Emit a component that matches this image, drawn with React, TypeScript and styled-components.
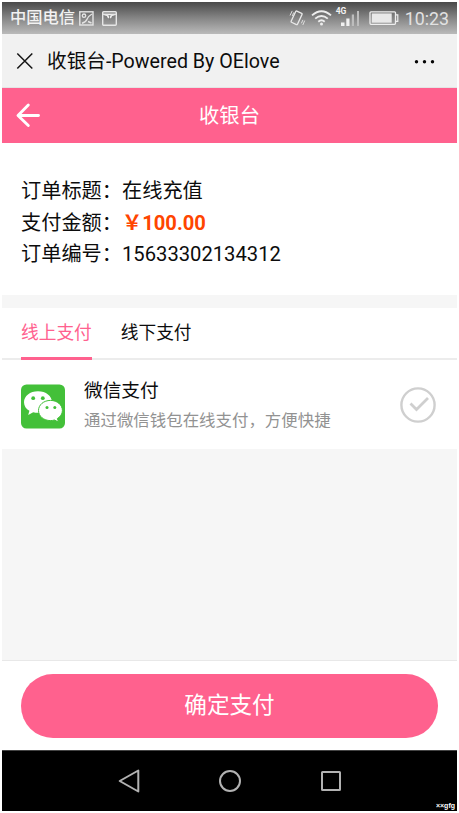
import React from "react";
import styled, { createGlobalStyle } from "styled-components";

const GlobalStyle = createGlobalStyle`
  * { box-sizing: border-box; }
  body { margin: 0; background: #fff; }
`;

const PINK = "#ff618e";

const Screen = styled.main`
  width: 455px;
  height: 809px;
  margin: 2px;
  display: flex;
  flex-direction: column;
  background: #f6f6f6;
  color: #0c0c0c;
  font-family: Roboto, "Noto Sans CJK SC", sans-serif;
  white-space: nowrap;
`;

const StatusBar = styled.div`
  height: 32px;
  flex: none;
  display: flex;
  align-items: center;
  justify-content: space-between;
  padding: 0 8px;
  color: #eee;
  background: linear-gradient(#494949, #858585 50%, #bababa);
`;

const StatusGroup = styled.div`
  display: flex;
  align-items: center;
`;

const Carrier = styled.span`
  font-size: 16.3px;
  line-height: 30px;
  font-weight: 500;
  color: #f2f2f2;
`;

const Clock = styled.span`
  font-size: 17.8px;
  line-height: 32px;
  padding-top: 1px;
  color: #e2e2e2;
`;

const Glyph = styled.svg<{ $gap?: number }>`
  display: block;
  flex: none;
  margin-left: ${(p) => p.$gap ?? 0}px;
  overflow: visible;
`;

const BrowserBar = styled.div`
  height: 54px;
  flex: none;
  display: flex;
  align-items: center;
  padding: 0 22px 0 15px;
  background: #f1f1f1;
  border-bottom: 1px solid #e4e4e4;
`;

const PageTitle = styled.span`
  flex: 1;
  margin-left: 14px;
  padding-top: 2px;
  font-size: 19.65px;
  line-height: 52px;
`;

const Header = styled.header`
  height: 55px;
  flex: none;
  display: grid;
  grid-template-columns: 60px 1fr 60px;
  align-items: center;
  background: ${PINK};
  color: #fff;
`;

const HeaderTitle = styled.h1`
  margin: 0;
  text-align: center;
  font-size: 20.3px;
  font-weight: 400;
  line-height: 54px;
`;

const Order = styled.dl`
  height: 152px;
  flex: none;
  margin: 0;
  padding: 33px 19px 0;
  background: #fff;
  font-size: 20.2px;
`;

const OrderRow = styled.div`
  display: flex;
  height: 31.6px;
  line-height: 31.6px;
`;

const Label = styled.dt`
  width: 101px;
`;

const Value = styled.dd<{ $price?: boolean }>`
  margin: 0;
  color: ${(p) => (p.$price ? "#ff4500" : "inherit")};
  font-weight: ${(p) => (p.$price ? 700 : 400)};
`;

const Tabs = styled.nav`
  height: 52px;
  flex: none;
  display: flex;
  gap: 29px;
  margin-top: 13px;
  padding: 0 19px;
  background: #fff;
  border-bottom: 2px solid #ececec;
`;

const Tab = styled.button<{ $active?: boolean }>`
  height: 52px;
  padding: 2px 0 0;
  border: 0;
  border-bottom: 3px solid ${(p) => (p.$active ? PINK : "transparent")};
  background: none;
  color: ${(p) => (p.$active ? PINK : "#0c0c0c")};
  font-family: inherit;
  font-size: 17.7px;
  line-height: 47px;
`;

const Method = styled.section`
  height: 89px;
  flex: none;
  display: flex;
  align-items: center;
  padding: 3px 21px 0 19px;
  background: #fff;
`;

const MethodText = styled.div`
  flex: 1;
  margin-left: 19px;
`;

const MethodName = styled.div`
  font-size: 18.7px;
  line-height: 30px;
`;

const MethodNote = styled.div`
  color: #929292;
  font-size: 16.45px;
  line-height: 30px;
`;

const Spacer = styled.div`
  flex: 1;
`;

const Footer = styled.footer`
  height: 90px;
  flex: none;
  padding: 13px 19px 0;
  background: #fff;
  border-top: 1px solid #e8e8e8;
`;

const PayButton = styled.button`
  display: block;
  width: 417px;
  height: 64px;
  padding: 0 0 5px;
  border: 0;
  border-radius: 32px;
  background: ${PINK};
  color: #fff;
  font-family: inherit;
  font-size: 22.6px;
`;

const SystemNav = styled.div`
  height: 61px;
  flex: none;
  position: relative;
  display: flex;
  align-items: center;
  justify-content: center;
  gap: 78px;
  background: #000;
  border-top: 1px solid #444;
`;

const Watermark = styled.span`
  position: absolute;
  right: 2px;
  bottom: 1px;
  color: #fff;
  font: 700 7px/8px "Liberation Sans", sans-serif;
`;

const PictureIcon = () => (
  <Glyph $gap={4} width="15" height="15" viewBox="0 0 15 15" fill="none" stroke="#e4e4e4" strokeWidth="1.4">
    <rect x="0.8" y="0.8" width="13.2" height="13.2" />
    <circle cx="5" cy="4.7" r="1.7" />
    <path d="M3 12.2Q6.8 11.5 8 8.3T13 3M9 10.5l3.5 1.5" />
  </Glyph>
);

const EnvelopeIcon = () => (
  <Glyph $gap={8} width="15" height="15" viewBox="0 0 15 15">
    <rect x="0.7" y="0.7" width="13.6" height="13.6" rx="1" fill="none" stroke="#e6e6e6" strokeWidth="1.4" />
    <path d="M1 2.6v1.2Q7.5 6.8 14 3.8V2.6z" fill="#e6e6e6" />
    <circle cx="7.5" cy="5.3" r="2.3" fill="#eee" />
    <path d="M6.4 4.6h2.2M7.5 4.6v4.2" stroke="#777" strokeWidth="0.8" />
  </Glyph>
);

const VibrateIcon = () => (
  <Glyph width="16" height="18" viewBox="0 0 16 18" fill="none" stroke="#e8e8e8" strokeWidth="1.3">
    <rect x="4.1" y="2.6" width="7" height="12.4" rx="0.8" transform="rotate(25 7.6 8.8)" />
    <path d="M1 6.5l2.2-4.6M3.2 7l1.6-3.6M12.4 14.3l1.5-3.4M13.8 16l1.9-4.4" strokeWidth="0.9" />
  </Glyph>
);

const WifiIcon = () => (
  <Glyph $gap={6} width="21" height="16" viewBox="0 0 21 16" fill="none" stroke="#ededed" strokeWidth="1.9">
    <path d="M1 5.4q9.5-8.2 19 0M4.2 8.6q6.3-5.4 12.6 0M7.3 11.7q3.2-2.7 6.4 0" />
    <circle cx="10.5" cy="14" r="1.5" fill="#ededed" stroke="none" />
  </Glyph>
);

const NetworkLabel = styled.span`
  align-self: flex-start;
  margin: 4px 0 0 4px;
  width: 11px;
  color: #f2f2f2;
  font-size: 8.5px;
  font-weight: 700;
  line-height: 10px;
`;

const SignalIcon = () => (
  <Glyph $gap={-6} width="19" height="16" viewBox="0 0 19 16">
    <path d="M0 12.5h3.5V16H0zM5.3 8.5h3.2V16H5.3z" fill="#f1f1f1" />
    <path d="M10.8 4.5h2.2V16h-2.2zM16 1h2v15h-2z" fill="#bdbdbd" />
  </Glyph>
);

const BatteryIcon = () => (
  <Glyph $gap={9} width="30" height="16" viewBox="0 0 30 16">
    <rect x="1" y="1.8" width="25.5" height="12.5" rx="1" fill="none" stroke="#eee" strokeWidth="1.3" />
    <rect x="2.7" y="3.4" width="20" height="9.3" fill="#e8e8e8" />
    <path d="M27 4.8h1.8v6.5H27" fill="none" stroke="#eee" strokeWidth="1.2" />
  </Glyph>
);

const CloseIcon = () => (
  <Glyph width="16" height="16" viewBox="0 0 16 16" stroke="#151515" strokeWidth="1.5">
    <path d="M.3 .5l15 15M15.3 .5l-15 15" />
  </Glyph>
);

const MoreIcon = () => (
  <Glyph width="20" height="4" viewBox="0 0 20 4" fill="#050505">
    <circle cx="1.5" cy="2.8" r="1.7" />
    <circle cx="9.5" cy="2.8" r="1.7" />
    <circle cx="17.5" cy="2.8" r="1.7" />
  </Glyph>
);

const BackIcon = () => (
  <Glyph $gap={14} width="24" height="24" viewBox="0 0 24 24" fill="none" stroke="#fff" strokeWidth="2.9" strokeLinecap="round" strokeLinejoin="round">
    <path d="M12.3 1L2 11.5 12.3 21.5M2.5 11.5h20" />
  </Glyph>
);

const WeChatIcon = () => (
  <Glyph width="44" height="44" viewBox="0 0 44 44">
    <rect y="0.5" width="44" height="44" rx="5.5" fill="#43c039" />
    <path d="M17 7.2C9 7.2 3 12 3 18.2c0 3.7 2 6.6 5.4 8.5L7.2 31l5-2.8c1.6.4 3.1.6 4.8.6 8 0 14-4.7 14-10.7S25 7.2 17 7.2z" fill="#fff" />
    <path d="M29.5 16.4c-6.8 0-12 4.5-12 10.1 0 5.7 5.2 10.1 12 10.1 1.3 0 2.7-.2 4-.6l4 2.1-1.1-3.6c3.1-1.8 5-4.6 5-8 0-5.6-5.1-10.1-11.9-10.1z" fill="#fff" stroke="#43c039" strokeWidth="1" />
    <g fill="#43c039">
      <circle cx="12.2" cy="14.2" r="1.9" />
      <circle cx="21.8" cy="14.2" r="1.9" />
      <circle cx="26" cy="23.6" r="1.5" />
      <circle cx="33.8" cy="23.6" r="1.5" />
    </g>
  </Glyph>
);

const CheckIcon = () => (
  <Glyph width="36" height="36" viewBox="0 1 36 36" fill="none" stroke="#cfcfcf" strokeWidth="2.4">
    <circle cx="18" cy="18" r="16.6" />
    <path d="M10.5 16.5l6 6L28 11" strokeWidth="2.8" />
  </Glyph>
);

const NavBackIcon = () => (
  <Glyph width="22" height="24" viewBox="0 0 22 24" fill="none" stroke="#b2b2b2" strokeWidth="2" strokeLinejoin="round">
    <path d="M20.3 1.5v21L1.7 12z" />
  </Glyph>
);

const NavHomeIcon = () => (
  <Glyph width="24" height="24" viewBox="0 0 24 24" fill="none" stroke="#b2b2b2" strokeWidth="2">
    <circle cx="12" cy="12" r="10" />
  </Glyph>
);

const NavRecentIcon = () => (
  <Glyph width="22" height="22" viewBox="0 0 22 22" fill="none" stroke="#b2b2b2" strokeWidth="2">
    <rect x="2" y="2" width="18" height="18" rx="0.5" />
  </Glyph>
);

export default function App() {
  return (
    <>
      <GlobalStyle />
      <Screen>
        <StatusBar>
          <StatusGroup>
            <Carrier>中国电信</Carrier>
            <PictureIcon />
            <EnvelopeIcon />
          </StatusGroup>
          <StatusGroup>
            <VibrateIcon />
            <WifiIcon />
            <NetworkLabel>4G</NetworkLabel>
            <SignalIcon />
            <BatteryIcon />
            <Glyph width="6" height="1" />
            <Clock>10:23</Clock>
          </StatusGroup>
        </StatusBar>
        <BrowserBar>
          <CloseIcon />
          <PageTitle>收银台-Powered By OElove</PageTitle>
          <MoreIcon />
        </BrowserBar>
        <Header>
          <BackIcon />
          <HeaderTitle>收银台</HeaderTitle>
        </Header>
        <Order>
          <OrderRow>
            <Label>订单标题：</Label>
            <Value>在线充值</Value>
          </OrderRow>
          <OrderRow>
            <Label>支付金额：</Label>
            <Value $price>￥100.00</Value>
          </OrderRow>
          <OrderRow>
            <Label>订单编号：</Label>
            <Value>15633302134312</Value>
          </OrderRow>
        </Order>
        <Tabs>
          <Tab $active>线上支付</Tab>
          <Tab>线下支付</Tab>
        </Tabs>
        <Method>
          <WeChatIcon />
          <MethodText>
            <MethodName>微信支付</MethodName>
            <MethodNote>通过微信钱包在线支付，方便快捷</MethodNote>
          </MethodText>
          <CheckIcon />
        </Method>
        <Spacer />
        <Footer>
          <PayButton>确定支付</PayButton>
        </Footer>
        <SystemNav>
          <NavBackIcon />
          <NavHomeIcon />
          <NavRecentIcon />
          <Watermark>××gfg</Watermark>
        </SystemNav>
      </Screen>
    </>
  );
}
